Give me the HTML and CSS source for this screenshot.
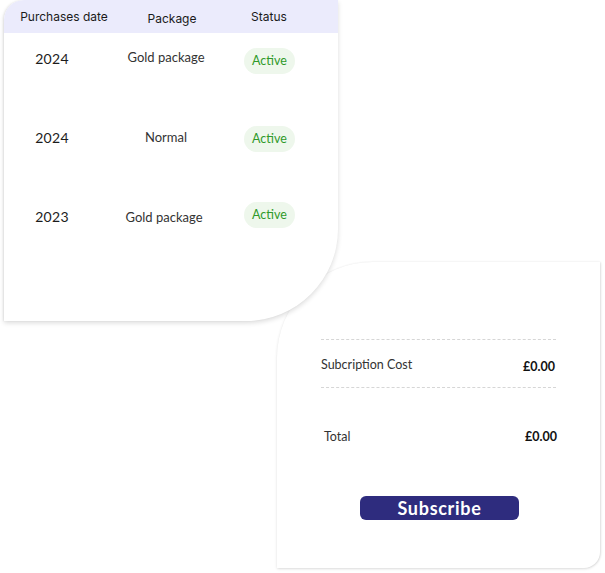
FILE: index.html
```html
<!DOCTYPE html>
<html>
<head>
<meta charset="utf-8">
<link rel="stylesheet" href="styles.css">
</head>
<body>
<div class="page">
  <div class="history">
    <div class="head">
      <span class="h h1">Purchases date</span>
      <span class="h h2">Package</span>
      <span class="h h3">Status</span>
    </div>
    <div class="row r1">
      <span class="year">2024</span>
      <span class="pkg">Gold package</span>
      <span class="badge">Active</span>
    </div>
    <div class="row r2">
      <span class="year">2024</span>
      <span class="pkg">Normal</span>
      <span class="badge">Active</span>
    </div>
    <div class="row r3">
      <span class="year">2023</span>
      <span class="pkg">Gold package</span>
      <span class="badge">Active</span>
    </div>
  </div>
  <div class="summary">
    <div class="line"></div>
    <div class="item">
      <span class="label">Subcription Cost</span>
      <span class="amount">£0.00</span>
    </div>
    <div class="line"></div>
    <div class="item total">
      <span class="label">Total</span>
      <span class="amount">£0.00</span>
    </div>
    <button class="subscribe">Subscribe</button>
  </div>
</div>
</body>
</html>
```

FILE: styles.css
```css
html, body {
  margin: 0;
  padding: 0;
  background: #ffffff;
}
.page {
  width: 605px;
  height: 573px;
  display: flex;
  flex-direction: column;
  font-family: "Lato", "Noto Sans", sans-serif;
  color: #222;
}
.history {
  width: 334px;
  height: 321px;
  margin-left: 4px;
  background: #fff;
  border-radius: 20px 0 92px 0;
  box-shadow: 0 2px 5px rgba(0,0,0,0.14), -1px 0 2px rgba(0,0,0,0.06);
  overflow: hidden;
  position: relative;
  z-index: 1;
}
.head {
  height: 33px;
  background: #ebebfc;
  display: grid;
  grid-template-columns: 120px 110px 104px;
  font-family: "Inter", sans-serif;
  font-size: 12px;
  color: #1a1a1a;
}
.h { text-align: center; }
.h1 { padding-top: 9px; }
.h2 { padding-top: 11px; padding-right: 14px; }
.h3 { padding-top: 9px; padding-right: 34px; }
.row {
  display: grid;
  grid-template-columns: 96px 132px 106px;
  align-items: start;
}
.year {
  text-align: center;
  font-size: 14px;
  letter-spacing: 0.3px;
  color: #1c1c1c;
}
.pkg {
  text-align: center;
  font-size: 13px;
  color: #333;
}
.badge {
  justify-self: start;
  margin-left: 12px;
  width: 51px;
  height: 26px;
  line-height: 26px;
  border-radius: 13px;
  background: #eef7ec;
  color: #2e9a2a;
  font-size: 12.5px;
  text-align: center;
}
.r1 { margin-top: 14px; }
.r1 .year { margin-top: 3px; }
.r1 .pkg { margin-top: 2px; }
.r1 .badge { margin-top: 1px; }
.r2 { margin-top: 51px; }
.r2 .year { margin-top: 4px; }
.r2 .pkg { margin-top: 4px; }
.r2 .badge { margin-top: 1px; }
.r3 { margin-top: 48px; }
.r3 .year { margin-top: 8px; }
.r3 .pkg { margin-top: 9px; margin-left: -4px; }
.r3 .badge { margin-top: 2px; }

.summary {
  align-self: flex-end;
  margin-right: 5px;
  margin-top: -59px;
  width: 323px;
  height: 306px;
  box-sizing: border-box;
  background: #fff;
  border-radius: 96px 0 16px 0;
  box-shadow: 0 1px 3px rgba(0,0,0,0.12), 1px 0 2px rgba(0,0,0,0.08);
  padding: 77px 44px 0 44px;
  display: flex;
  flex-direction: column;
}
.line {
  height: 0;
  border-top: 1px dashed #d6d6d6;
}
.item {
  display: flex;
  justify-content: space-between;
  align-items: center;
  height: 47px;
  font-size: 12.5px;
}
.item .label { color: #333; margin-top: 1px; }
.item .amount { font-weight: 700; color: #111; font-size: 12.5px; margin-top: 5px; margin-right: 1px; }
.item.total {
  margin-top: 25px;
  height: 47px;
  padding-left: 3px;
  margin-right: -2px;
}
.item.total .label { margin-top: 0; }
.item.total .amount { margin-top: 0; }
.subscribe {
  margin-top: 36px;
  margin-left: 39px;
  width: 159px;
  height: 24px;
  border: none;
  border-radius: 6px;
  background: #2e2c7e;
  color: #fff;
  font-family: "Lato", "Noto Sans", sans-serif;
  font-size: 18px;
  font-weight: 700;
  letter-spacing: 0.7px;
  line-height: 24px;
  padding: 0;
}
```
